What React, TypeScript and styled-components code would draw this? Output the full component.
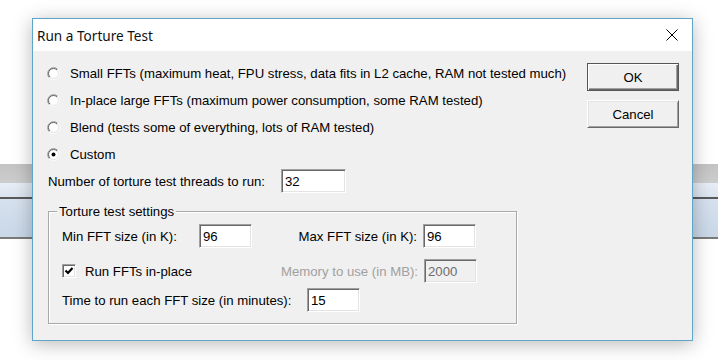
import React from "react";
import styled, { createGlobalStyle } from "styled-components";

const GlobalStyle = createGlobalStyle`
  html, body { margin: 0; padding: 0; background: #fff; }
  body { font-family: "Liberation Sans", Arial, sans-serif; }
`;

const Root = styled.div`
  position: relative;
  width: 718px;
  height: 360px;
  background: #fff;
  overflow: hidden;
`;

const Backdrop = styled.div`
  padding-top: 164px;
  display: flex;
  flex-direction: column;
`;

const Band = styled.div<{ $h: number; $bg: string }>`
  height: ${(p) => p.$h}px;
  background: ${(p) => p.$bg};
`;

const Dialog = styled.div`
  position: absolute;
  left: 32px;
  top: 18px;
  width: 661px;
  height: 323px;
  box-sizing: border-box;
  border: 1px solid #5fa5c8;
  box-shadow: 0 3px 18px rgba(0, 0, 0, 0.28);
  display: flex;
  flex-direction: column;
  background: #f0f0f0;
`;

const TitleBar = styled.div`
  height: 32px;
  flex: none;
  background: #fff;
  display: flex;
  align-items: center;
  justify-content: space-between;
  padding: 0 14px 0 4px;
`;

const TitleText = styled.span`
  font-family: "Noto Sans", "Open Sans", sans-serif;
  font-size: 13.6px;
  color: #111;
`;

const Body = styled.div`
  flex: 1;
  display: flex;
  padding: 9px 13px 0 14px;
  font-size: 13.2px;
  color: #000;
`;

const Main = styled.div`
  flex: 1;
  display: flex;
  flex-direction: column;
`;

const RadioRow = styled.div`
  height: 27px;
  display: flex;
  align-items: center;
  gap: 10px;
  white-space: nowrap;
`;

const FieldRow = styled.div`
  margin-top: 1px;
  height: 24px;
  display: flex;
  align-items: center;
  padding-left: 1px;
`;

const Label = styled.span<{ $w?: number; $right?: boolean; $disabled?: boolean }>`
  ${(p) => (p.$w ? `width: ${p.$w}px; flex: none;` : "")}
  text-align: ${(p) => (p.$right ? "right" : "left")};
  padding-right: ${(p) => (p.$right ? "6px" : "0")};
  box-sizing: border-box;
  color: ${(p) => (p.$disabled ? "#a0a0a0" : "#000")};
  white-space: nowrap;
`;

const TextBox = styled.div<{ $w: number; $disabled?: boolean }>`
  width: ${(p) => p.$w}px;
  height: 24px;
  box-sizing: border-box;
  display: flex;
  align-items: center;
  padding-left: 3px;
  background: ${(p) => (p.$disabled ? "#f0f0f0" : "#fff")};
  color: ${(p) => (p.$disabled ? "#6d6d6d" : "#000")};
  border-style: solid;
  border-width: 1px;
  border-color: #a0a0a0 #fff #fff #a0a0a0;
  box-shadow: inset 1px 1px #696969, inset -1px -1px #e3e3e3;
`;

const Group = styled.div`
  position: relative;
  margin-top: 18px;
  margin-left: 1px;
  width: 469px;
  height: 113px;
  box-sizing: border-box;
  border: 1px solid #a9a9a9;
  box-shadow: inset 1px 1px #fff, 1px 1px #fff;
  padding: 12px 0 0 13px;
`;

const Legend = styled.span`
  position: absolute;
  top: -8px;
  left: 8px;
  padding: 0 2px;
  line-height: 15px;
  background: #f0f0f0;
`;

const GridRow = styled.div<{ $cols: string; $mt: number }>`
  display: grid;
  grid-template-columns: ${(p) => p.$cols};
  align-items: center;
  height: 24px;
  margin-top: ${(p) => p.$mt}px;
`;

const CheckLabel = styled.label`
  grid-column: span 2;
  display: flex;
  align-items: center;
  gap: 9px;
  white-space: nowrap;
`;

const CheckBox = styled.span`
  width: 14px;
  height: 14px;
  box-sizing: border-box;
  display: inline-flex;
  align-items: center;
  justify-content: center;
  background: #fff;
  border-style: solid;
  border-width: 1px;
  border-color: #a0a0a0 #fff #fff #a0a0a0;
  box-shadow: inset 1px 1px #696969, inset -1px -1px #e3e3e3;
`;

const ButtonCol = styled.div`
  width: 92px;
  flex: none;
  padding-top: 3px;
  display: flex;
  flex-direction: column;
  gap: 9px;
`;

const Button = styled.button<{ $default?: boolean }>`
  width: 92px;
  height: 28px;
  box-sizing: border-box;
  background: #f0f0f0;
  font-family: "Liberation Sans", Arial, sans-serif;
  font-size: 13.2px;
  color: #000;
  padding: 0;
  border-style: solid;
  border-width: 1px;
  ${(p) =>
    p.$default
      ? `border-color: #555;
         box-shadow: inset 1px 1px #fff, inset -1px -1px #696969, inset -2px -2px #a0a0a0;`
      : `border-color: #fff #696969 #696969 #fff;
         box-shadow: inset 1px 1px #e3e3e3, inset -1px -1px #a0a0a0;`}
`;

const Radio = ({ checked }: { checked?: boolean }) => (
  <svg width="13" height="13" viewBox="0 0 13 13" style={{ flex: "none" }}>
    <circle cx="6.5" cy="6.5" r="5" fill="#fff" />
    <path d="M2.26 10.74 A6 6 0 0 1 10.74 2.26" fill="none" stroke="#9a9a9a" />
    <path d="M10.74 2.26 A6 6 0 0 1 2.26 10.74" fill="none" stroke="#fff" />
    <path d="M2.96 10.04 A5 5 0 0 1 10.04 2.96" fill="none" stroke="#5f5f5f" />
    <path d="M10.04 2.96 A5 5 0 0 1 2.96 10.04" fill="none" stroke="#e3e3e3" />
    {checked && <circle cx="6.5" cy="6.5" r="2" fill="#000" />}
  </svg>
);

const CloseIcon = () => (
  <svg width="12" height="12" viewBox="0 0 12 12">
    <path d="M0.5 0.5 L11.5 11.5 M11.5 0.5 L0.5 11.5" stroke="#000" strokeWidth="1" />
  </svg>
);

const CheckMark = () => (
  <svg width="10" height="10" viewBox="0 0 10 10">
    <polyline points="1.5,4.5 4,7 8.5,2" fill="none" stroke="#000" strokeWidth="2.2" />
  </svg>
);

const options = [
  "Small FFTs (maximum heat, FPU stress, data fits in L2 cache, RAM not tested much)",
  "In-place large FFTs (maximum power consumption, some RAM tested)",
  "Blend (tests some of everything, lots of RAM tested)",
  "Custom",
];

export default function App() {
  return (
    <Root>
      <GlobalStyle />
      <Backdrop>
        <Band $h={19} $bg="linear-gradient(#c3c3c3, #cdcdcd)" />
        <Band $h={14} $bg="linear-gradient(#e8eef6, #dbe4ef)" />
        <Band $h={2} $bg="#5a5a5a" />
        <Band $h={38} $bg="linear-gradient(#d6e1ee, #c9d7e7)" />
        <Band $h={2} $bg="#7a7a7a" />
      </Backdrop>
      <Dialog>
        <TitleBar>
          <TitleText>Run a Torture Test</TitleText>
          <CloseIcon />
        </TitleBar>
        <Body>
          <Main>
            {options.map((o, i) => (
              <RadioRow key={o}>
                <Radio checked={i === 3} />
                <span>{o}</span>
              </RadioRow>
            ))}
            <FieldRow>
              <Label $w={233}>Number of torture test threads to run:</Label>
              <TextBox $w={65}>32</TextBox>
            </FieldRow>
            <Group>
              <Legend>Torture test settings</Legend>
              <GridRow $cols="137px 53px 171px 53px" $mt={0}>
                <Label>Min FFT size (in K):</Label>
                <TextBox $w={53}>96</TextBox>
                <Label $right>Max FFT size (in K):</Label>
                <TextBox $w={53}>96</TextBox>
              </GridRow>
              <GridRow $cols="137px 53px 172px 53px" $mt={11}>
                <CheckLabel>
                  <CheckBox>
                    <CheckMark />
                  </CheckBox>
                  <span>Run FFTs in-place</span>
                </CheckLabel>
                <Label $right $disabled>
                  Memory to use (in MB):
                </Label>
                <TextBox $w={53} $disabled>
                  2000
                </TextBox>
              </GridRow>
              <GridRow $cols="245px 53px" $mt={5}>
                <Label>Time to run each FFT size (in minutes):</Label>
                <TextBox $w={53}>15</TextBox>
              </GridRow>
            </Group>
          </Main>
          <ButtonCol>
            <Button $default>OK</Button>
            <Button>Cancel</Button>
          </ButtonCol>
        </Body>
      </Dialog>
    </Root>
  );
}
